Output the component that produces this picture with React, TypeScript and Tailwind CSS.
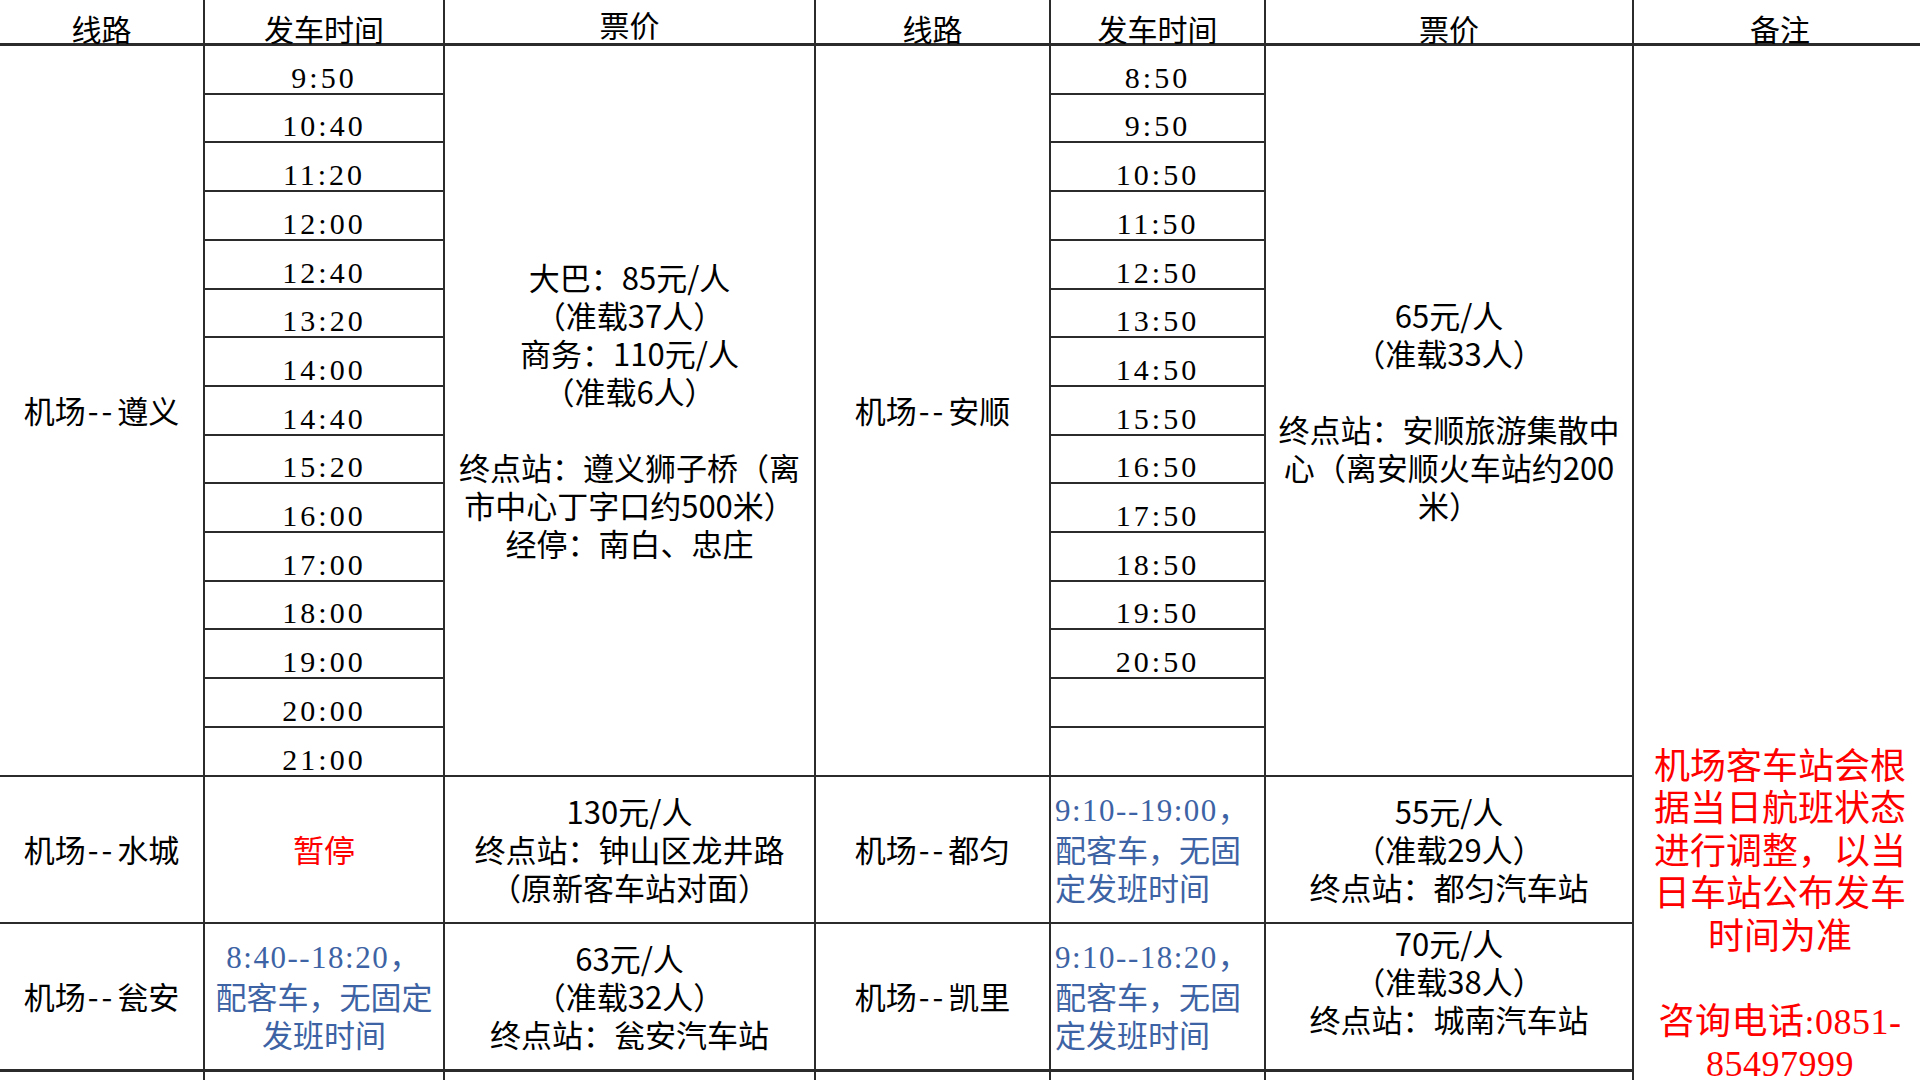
const sans = "font-[family-name:'Noto_Sans_CJK_SC','Noto_Sans',sans-serif]";
const serif = "font-[family-name:'Liberation_Serif','Noto_Sans_CJK_SC',serif]";
const line = "border-[#2b2b2b]";

const zunyiTimes = [
  "9:50", "10:40", "11:20", "12:00", "12:40", "13:20", "14:00", "14:40",
  "15:20", "16:00", "17:00", "18:00", "19:00", "20:00", "21:00",
];

const anshunTimes = [
  "8:50", "9:50", "10:50", "11:50", "12:50", "13:50", "14:50", "15:50",
  "16:50", "17:50", "18:50", "19:50", "20:50", "", "",
];

function TimeColumn({ times }: { times: string[] }) {
  return (
    <div className={`flex flex-col border-r-2 ${line}`}>
      {times.map((t, i) => (
        <div
          key={i}
          className={`flex flex-1 items-end justify-center border-b-2 ${line} ${serif} text-[30px] leading-[30px] tracking-[3px]`}
        >
          {t}
        </div>
      ))}
    </div>
  );
}

function Lines({ lines }: { lines: string[] }) {
  return (
    <>
      {lines.map((l, i) => (
        <div key={i} className="whitespace-nowrap">
          {l || "\u00a0"}
        </div>
      ))}
    </>
  );
}

function Header({ label, className = "" }: { label: string; className?: string }) {
  return (
    <div
      className={`flex items-end justify-center border-b-[3px] ${line} ${sans} text-[30px] leading-[30px] ${className}`}
    >
      {label}
    </div>
  );
}

function Route({ to, last = false }: { to: string; last?: boolean }) {
  return (
    <div
      className={`flex items-center justify-center border-r-2 ${last ? "border-b-[3px]" : "border-b-2"} ${line} ${sans} text-[31px] leading-[38px]`}
    >
      机场<span className="px-[2px] tracking-[3px]">--</span>{to}
    </div>
  );
}

function Info({
  lines,
  last = false,
  top = false,
}: {
  lines: string[];
  last?: boolean;
  top?: boolean;
}) {
  return (
    <div
      className={`flex flex-col items-center ${top ? "justify-start" : "justify-center"} border-r-2 ${last ? "border-b-[3px]" : "border-b-2"} ${line} ${sans} text-[31px] leading-[38px]`}
    >
      <Lines lines={lines} />
    </div>
  );
}

function Shuttle({
  first,
  rest,
  left = false,
  last = false,
}: {
  first: string;
  rest: string[];
  left?: boolean;
  last?: boolean;
}) {
  return (
    <div
      className={`flex flex-col justify-center ${left ? "items-start pl-[4px]" : "items-center"} border-r-2 ${last ? "border-b-[3px]" : "border-b-2"} ${line} ${serif} text-[31px] leading-[38px] text-[#3d63a5]`}
    >
      <div className="whitespace-nowrap tracking-[1.5px]">{first}</div>
      {rest.map((l, i) => (
        <div key={i} className={`whitespace-nowrap ${sans}`}>
          {l}
        </div>
      ))}
    </div>
  );
}

export default function App() {
  return (
    <div className="h-[1080px] w-[1920px] overflow-hidden bg-white text-black">
      <div className="grid w-[1926px] grid-cols-[205px_240px_371px_235px_215px_368px_292px] grid-rows-[46px_730.5px_147px_148px_40px]">
        {/* 表头 */}
        <Header label="线路" className="border-r-2" />
        <Header label="发车时间" className="border-r-2" />
        <Header label="票价" className="border-r-2 pb-[4px]" />
        <Header label="线路" className="border-r-2" />
        <Header label="发车时间" className="border-r-2" />
        <Header label="票价" className="border-r-2" />
        <Header label="备注" />

        {/* 备注 */}
        <div
          className={`col-start-7 row-start-2 row-span-4 flex flex-col items-center justify-end pb-[26px] ${serif} text-[36px] leading-[42.5px] text-[#ff0000]`}
        >
          <Lines
            lines={[
              "机场客车站会根",
              "据当日航班状态",
              "进行调整，以当",
              "日车站公布发车",
              "时间为准",
              "",
            ]}
          />
          <div className="whitespace-nowrap tracking-[0.5px]">咨询电话:0851-</div>
          <div className="whitespace-nowrap tracking-[0.5px]">85497999</div>
        </div>

        {/* 遵义 / 安顺 */}
        <Route to="遵义" />
        <TimeColumn times={zunyiTimes} />
        <Info
          lines={[
            "大巴：85元/人",
            "（准载37人）",
            "商务：110元/人",
            "（准载6人）",
            "",
            "终点站：遵义狮子桥（离",
            "市中心丁字口约500米）",
            "经停：南白、忠庄",
          ]}
        />
        <Route to="安顺" />
        <TimeColumn times={anshunTimes} />
        <Info
          lines={[
            "65元/人",
            "（准载33人）",
            "",
            "终点站：安顺旅游集散中",
            "心（离安顺火车站约200",
            "米）",
          ]}
        />

        {/* 水城 / 都匀 */}
        <Route to="水城" />
        <div
          className={`flex items-center justify-center border-r-2 border-b-2 ${line} ${sans} text-[31px] leading-[38px] text-[#ff0000]`}
        >
          暂停
        </div>
        <Info lines={["130元/人", "终点站：钟山区龙井路", "（原新客车站对面）"]} />
        <Route to="都匀" />
        <Shuttle first="9:10--19:00，" rest={["配客车，无固", "定发班时间"]} left />
        <Info lines={["55元/人", "（准载29人）", "终点站：都匀汽车站"]} />

        {/* 瓮安 / 凯里 */}
        <Route to="瓮安" last />
        <Shuttle first="8:40--18:20，" rest={["配客车，无固定", "发班时间"]} last />
        <Info lines={["63元/人", "（准载32人）", "终点站：瓮安汽车站"]} last />
        <Route to="凯里" last />
        <Shuttle first="9:10--18:20，" rest={["配客车，无固", "定发班时间"]} left last />
        <Info lines={["70元/人", "（准载38人）", "终点站：城南汽车站"]} last top />

        {/* 下一行（被截断） */}
        <div className={`border-r-2 ${line}`} />
        <div className={`border-r-2 ${line}`} />
        <div className={`border-r-2 ${line}`} />
        <div className={`border-r-2 ${line}`} />
        <div className={`border-r-2 ${line}`} />
        <div className={`border-r-2 ${line}`} />
      </div>
    </div>
  );
}
